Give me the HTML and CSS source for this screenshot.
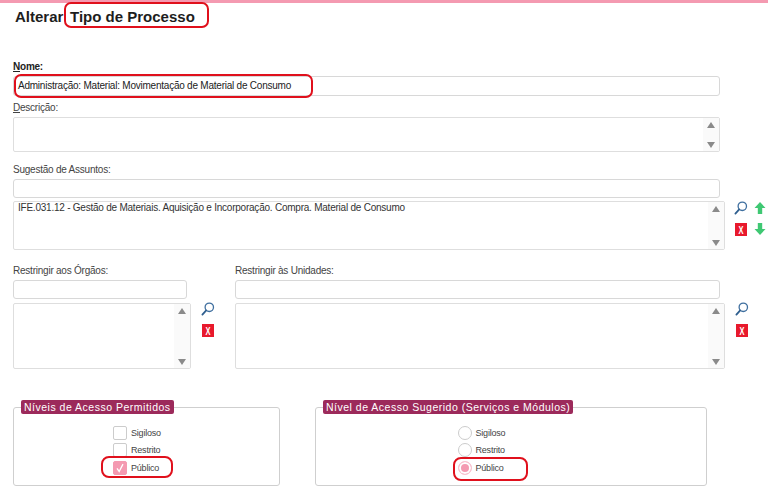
FILE: index.html
```html
<!DOCTYPE html>
<html lang="pt-BR">
<head>
<meta charset="utf-8">
<title>Alterar Tipo de Processo</title>
<link rel="stylesheet" href="styles.css">
</head>
<body>
<div class="topbar"></div>
<main class="page">
  <h1 class="title">Alterar <span class="hl-wrap title-mark">Tipo de Processo<span class="mark mark-title"></span></span></h1>

  <label class="label label-nome"><b><u>N</u>ome:</b></label>
  <div class="input input-full hl-wrap">
    <span>Administração: Material: Movimentação de Material de Consumo</span>
    <span class="mark mark-nome"></span>
  </div>

  <label class="label label-desc"><u>D</u>escrição:</label>
  <div class="box box-desc">
    <div class="scroll"><svg class="arr" viewBox="0 0 8 6"><path d="M4 0l4 6H0z"/></svg><svg class="arr" viewBox="0 0 8 6"><path d="M0 0h8L4 6z"/></svg></div>
  </div>

  <label class="label label-sug">Sugestão de Assuntos:</label>
  <div class="input input-full input-sug"></div>
  <div class="row-assuntos">
    <div class="box box-assuntos">
      <span class="box-text">IFE.031.12 - Gestão de Materiais. Aquisição e Incorporação. Compra. Material de Consumo</span>
      <div class="scroll"><svg class="arr" viewBox="0 0 8 6"><path d="M4 0l4 6H0z"/></svg><svg class="arr" viewBox="0 0 8 6"><path d="M0 0h8L4 6z"/></svg></div>
    </div>
    <div class="icons icons-2">
      <svg class="ico" viewBox="0 0 14 14"><circle cx="8.3" cy="5.3" r="4.2" fill="none" stroke="#3f6f9f" stroke-width="1.3"/><path d="M5.2 8.4L1.4 12.6" stroke="#2f5f8f" stroke-width="1.8" stroke-linecap="round"/></svg>
      <svg class="ico" viewBox="0 0 14 14"><path d="M7 1l5.5 6H9.2v6H4.8V7H1.5z" fill="#3fc873"/></svg>
      <svg class="ico" viewBox="0 0 14 14"><rect x="1" y="1" width="12" height="13" fill="#e8192c"/><text x="4.5" y="11.5" class="x-txt" textLength="5" lengthAdjust="spacingAndGlyphs">X</text></svg>
      <svg class="ico" viewBox="0 0 14 14"><path d="M7 13l5.5-6H9.2V1H4.8v6H1.5z" fill="#3fc873"/></svg>
    </div>
  </div>

  <div class="row-restrict">
    <div class="col col-org">
      <label class="label label-res">Restringir aos Órgãos:</label>
      <div class="input input-org"></div>
      <div class="box box-list">
        <div class="scroll"><svg class="arr" viewBox="0 0 8 6"><path d="M4 0l4 6H0z"/></svg><svg class="arr" viewBox="0 0 8 6"><path d="M0 0h8L4 6z"/></svg></div>
      </div>
    </div>
    <div class="icons icons-1 icons-org">
      <svg class="ico" viewBox="0 0 14 14"><circle cx="8.3" cy="5.3" r="4.2" fill="none" stroke="#3f6f9f" stroke-width="1.3"/><path d="M5.2 8.4L1.4 12.6" stroke="#2f5f8f" stroke-width="1.8" stroke-linecap="round"/></svg>
      <svg class="ico" viewBox="0 0 14 14"><rect x="1" y="1" width="12" height="13" fill="#e8192c"/><text x="4.5" y="11.5" class="x-txt" textLength="5" lengthAdjust="spacingAndGlyphs">X</text></svg>
    </div>
    <div class="col col-uni">
      <label class="label label-res">Restringir às Unidades:</label>
      <div class="input input-uni"></div>
      <div class="box box-list">
        <div class="scroll"><svg class="arr" viewBox="0 0 8 6"><path d="M4 0l4 6H0z"/></svg><svg class="arr" viewBox="0 0 8 6"><path d="M0 0h8L4 6z"/></svg></div>
      </div>
    </div>
    <div class="icons icons-1 icons-uni">
      <svg class="ico" viewBox="0 0 14 14"><circle cx="8.3" cy="5.3" r="4.2" fill="none" stroke="#3f6f9f" stroke-width="1.3"/><path d="M5.2 8.4L1.4 12.6" stroke="#2f5f8f" stroke-width="1.8" stroke-linecap="round"/></svg>
      <svg class="ico" viewBox="0 0 14 14"><rect x="1" y="1" width="12" height="13" fill="#e8192c"/><text x="4.5" y="11.5" class="x-txt" textLength="5" lengthAdjust="spacingAndGlyphs">X</text></svg>
    </div>
  </div>

  <div class="row-sets">
    <section class="set set-left">
      <h2 class="legend">Níveis de Acesso Permitidos</h2>
      <div class="opts">
        <div class="opt"><span class="chk"></span>Sigiloso</div>
        <div class="opt"><span class="chk"></span>Restrito</div>
        <div class="opt hl-wrap"><span class="chk chk-on"><svg viewBox="0 0 14 14"><path d="M3.5 7.5l2.5 3.5L10.5 2.5" fill="none" stroke="#fff" stroke-width="1.5"/></svg></span>Público<span class="mark mark-pub1"></span></div>
      </div>
    </section>
    <section class="set set-right">
      <h2 class="legend">Nível de Acesso Sugerido (Serviços e Módulos)</h2>
      <div class="opts">
        <div class="opt"><span class="rad"></span>Sigiloso</div>
        <div class="opt"><span class="rad"></span>Restrito</div>
        <div class="opt hl-wrap"><span class="rad rad-on"></span>Público<span class="mark mark-pub2"></span></div>
      </div>
    </section>
  </div>
</main>
</body>
</html>
```
FILE: styles.css
```css
* { box-sizing: border-box; }
html, body { margin: 0; height: 489px; overflow: hidden; }
body { background: #fff; color: #333; font: 10px/12px "Liberation Sans", Arial, sans-serif; letter-spacing: -.23px; }
.topbar { height: 3px; background: #f49ab1; }
.page { padding-left: 13px; width: 768px; }
.title { margin: 5px 0 0 2px; font-size: 15px; line-height: 18px; font-weight: 700; color: #1d1d1d; letter-spacing: 0; }
.title-mark { margin-left: 2.5px; }
.hl-wrap { position: relative; }
.mark { position: absolute; border: 2px solid #e0101c; border-radius: 7px; pointer-events: none; }
.mark-title { left: -6px; top: -6px; width: 145px; height: 26px; }
.mark-nome { left: 0; top: -3px; width: 299px; height: 24px; }
.mark-pub1 { left: -12px; top: -3px; width: 72px; height: 22px; border-radius: 8px; }
.mark-pub2 { left: -5px; top: -2px; width: 75px; height: 24px; border-radius: 8px; }
.label { display: block; color: #444; }
.label-nome { margin-top: 35px; color: #222; }
.label-desc { margin-top: 6px; }
.label-sug { margin-top: 12px; }
.input { display: flex; align-items: center; height: 20px; border: 1px solid #d8d8d8; border-radius: 3px; background: #fff; padding-left: 4px; color: #222; }
.input-full { width: 707px; margin-top: 3px; }
.input-sug { height: 19px; }
.box { display: flex; justify-content: flex-end; border: 1px solid #dedede; border-radius: 2px; background: #fff; position: relative; }
.box-desc { width: 707px; height: 35px; margin-top: 3px; }
.scroll { width: 16px; display: flex; flex-direction: column; justify-content: space-between; align-items: center; padding: 4px 0 3px; background: #fafafa; }
.arr { width: 8px; height: 6px; fill: #8a8a8a; display: block; }
.row-assuntos { display: flex; margin-top: 3px; }
.box-assuntos { width: 712px; height: 49px; justify-content: space-between; }
.box-text { padding-left: 4px; color: #333; }
.icons { display: grid; grid-template-columns: 14px 14px; gap: 7px 5px; align-content: start; }
.icons-2 { margin-left: 9px; margin-top: 0; }
.icons-1 { grid-template-columns: 14px; }
.ico { width: 14px; height: 14px; display: block; }
.x-txt { font: 700 11px "Liberation Sans", sans-serif; fill: #fff; letter-spacing: 0; }
.row-restrict { display: flex; margin-top: 15px; }
.col-org { width: 178px; }
.col-uni { width: 490px; }
.input-org { width: 174px; margin-top: 3px; height: 19px; }
.input-uni { width: 485px; margin-top: 3px; height: 19px; }
.box-list { height: 66px; margin-top: 4px; }
.icons-org { margin: 37px 0 0 10px; width: 34px; }
.icons-uni { margin: 37px 0 0 10px; }
.row-sets { display: flex; margin-top: 38px; }
.set { position: relative; height: 79px; border: 1px solid #cfcfcf; border-radius: 3px; background: #fff; }
.set-left { width: 267px; }
.set-right { width: 392px; margin-left: 35px; }
.legend { position: absolute; left: 7px; top: -8px; margin: 0; padding: 0 3px; height: 14px; line-height: 14px; background: #9c2a5b; color: #fff; font-size: 10.5px; font-weight: 400; letter-spacing: .5px; border-radius: 2px; white-space: nowrap; }
.opts { display: flex; flex-direction: column; align-items: center; padding-top: 16px; }
.set-left .opts { padding-right: 21px; }
.set-right .opts { padding-right: 61px; }
.opt { display: flex; align-items: center; height: 17.5px; width: 46px; color: #444; font-size: 9px; letter-spacing: -.2px; gap: 4px; white-space: nowrap; }
.chk { flex: none; width: 14px; height: 14px; border: 1px solid #ccc; border-radius: 2px; background: #fff; display: block; }
.chk-on { background: #f49ab1; border-color: #f49ab1; }
.chk-on svg { display: block; width: 100%; height: 100%; }
.rad { flex: none; width: 14px; height: 14px; border: 1px solid #ccc; border-radius: 50%; background: #fff; display: block; }
.rad-on { background: #f49ab1; border-color: #f8c4d0; box-shadow: inset 0 0 0 2px #fff; }
```
